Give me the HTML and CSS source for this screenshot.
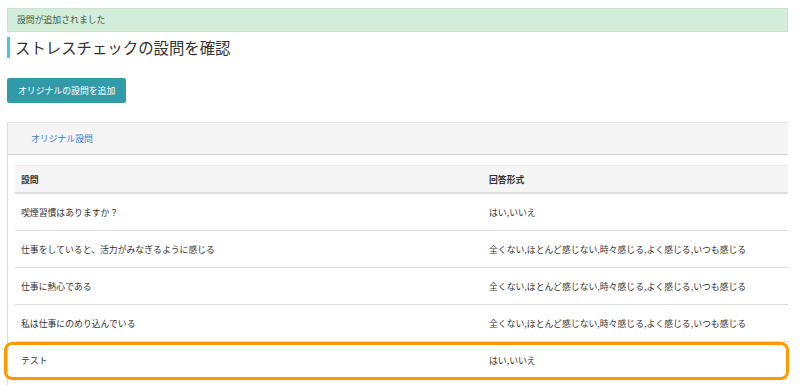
FILE: index.html
```html
<!DOCTYPE html>
<html lang="ja">
<head>
    <meta charset="UTF-8">
    <title>ストレスチェックの設問を確認</title>
    <link rel="stylesheet" href="styles.css">
</head>
<body>

<div class="alert-success">設問が追加されました</div>

<h1 class="page-title">ストレスチェックの設問を確認</h1>

<div class="btn-add">オリジナルの設問を追加</div>

<div class="panel">
    <div class="panel-heading">
        <a class="panel-link" href="#">オリジナル設問</a>
    </div>
    <div class="panel-body">
        <div class="table-wrap">
            <table class="question-table">
                <thead>
                <tr>
                    <th class="col-question">設問</th>
                    <th>回答形式</th>
                </tr>
                </thead>
                <tbody>
                <tr>
                    <td>喫煙習慣はありますか？</td>
                    <td>はい,いいえ</td>
                </tr>
                <tr>
                    <td>仕事をしていると、活力がみなぎるように感じる</td>
                    <td>全くない,ほとんど感じない,時々感じる,よく感じる,いつも感じる</td>
                </tr>
                <tr>
                    <td>仕事に熱心である</td>
                    <td>全くない,ほとんど感じない,時々感じる,よく感じる,いつも感じる</td>
                </tr>
                <tr>
                    <td>私は仕事にのめり込んでいる</td>
                    <td>全くない,ほとんど感じない,時々感じる,よく感じる,いつも感じる</td>
                </tr>
                <tr class="row-new">
                    <td>テスト</td>
                    <td>はい,いいえ</td>
                </tr>
                </tbody>
            </table>
            <div class="row-highlight"></div>
        </div>
    </div>
</div>

</body>
</html>
```

FILE: styles.css
```css
body {
    margin: 0;
    padding: 8px 13px 0 7px;
    background-color: #ffffff;
    font-family: "Noto Sans CJK JP", "Liberation Sans", sans-serif;
    font-size: 8.85px;
    color: #333333;
    overflow: hidden;
}

.alert-success {
    height: 22px;
    line-height: 22px;
    padding: 0 9px;
    color: #3c5a43;
    background-color: #d4ecda;
    border: 1px solid #c6e5cd;
}

.page-title {
    margin: 5px 0 0 0;
    height: 21px;
    line-height: 21px;
    padding-left: 5px;
    font-size: 15.4px;
    font-weight: normal;
    color: #333333;
    border-left: 3px solid #4fc3dc;
}

.btn-add {
    display: inline-block;
    margin-top: 20px;
    height: 25px;
    line-height: 25px;
    padding: 0 11px;
    color: white;
    background-color: #319ba9;
    border-radius: 2px;
}

.panel {
    margin-top: 19px;
    border-left: 1px solid #dddddd;
    border-top: 1px solid #e6e6e6;
    min-height: 262px;
}

.panel-heading {
    height: 31px;
    line-height: 31px;
    padding-left: 23px;
    background-color: #f5f5f5;
    border-bottom: 1px solid #cfcfcf;
}

.panel-link {
    color: #3b7ccf;
    text-decoration: none;
}

.panel-body {
    padding: 10px 0 0 7px;
}

.table-wrap {
    position: relative;
}

.question-table {
    width: 100%;
    border-collapse: collapse;
}

.question-table th {
    height: 26px;
    padding: 0 6px;
    text-align: left;
    font-weight: bold;
    background-color: #f5f5f5;
    border-top: 1px solid #ececec;
    border-bottom: 2px solid #dddddd;
}

.col-question {
    width: 456px;
}

.question-table td {
    height: 36px;
    padding: 0 6px;
    border-bottom: 1px solid #dddddd;
}

.row-highlight {
    position: absolute;
    left: -11px;
    right: -1px;
    bottom: -1px;
    height: 32px;
    border: 3px solid #ff9900;
    border-radius: 8px;
}
```
